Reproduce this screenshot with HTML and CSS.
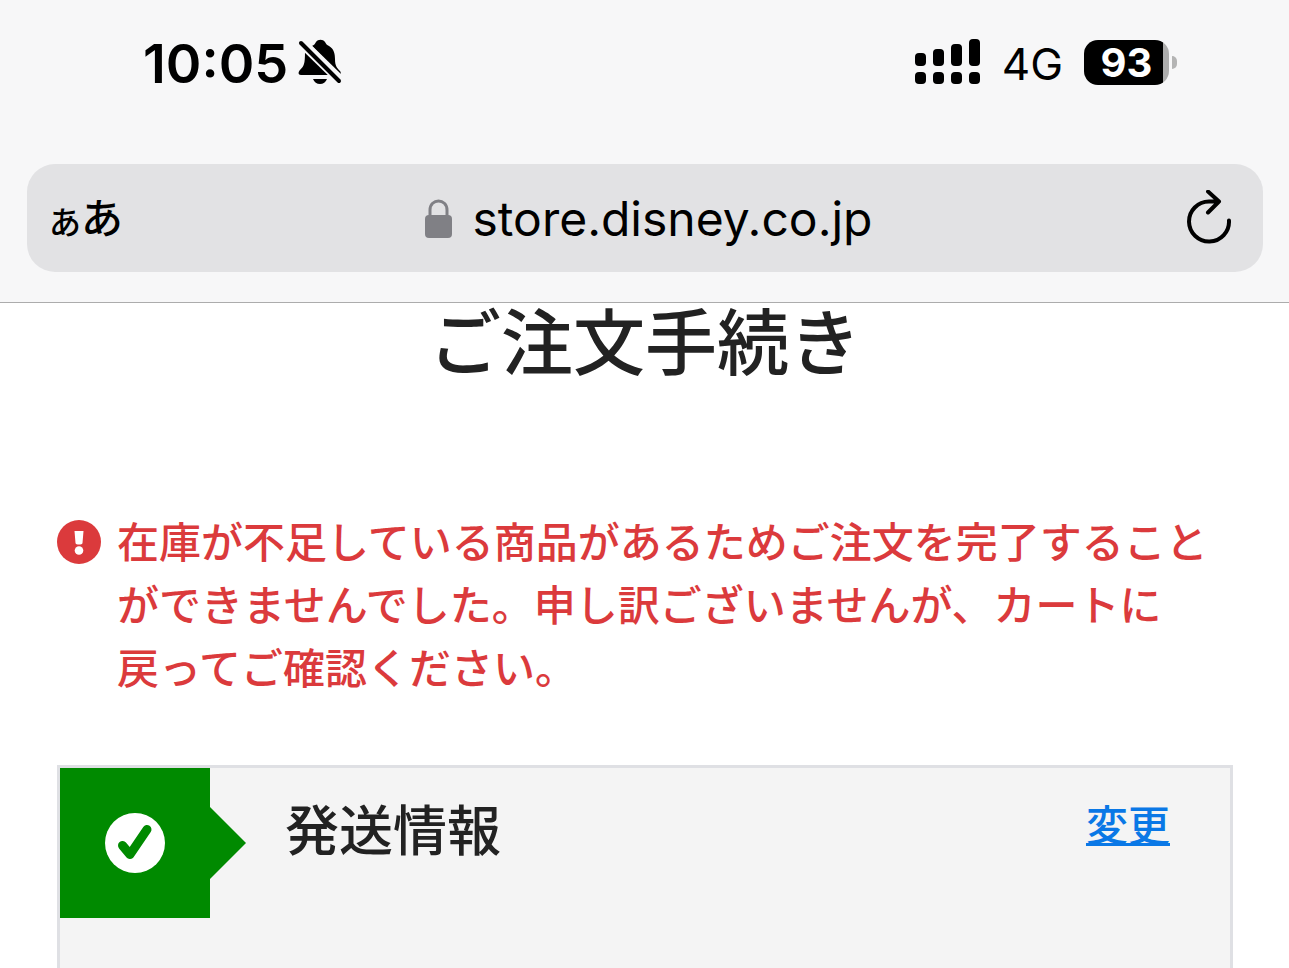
FILE: index.html
```
<!DOCTYPE html>
<html lang="ja">
<head>
    <meta charset="UTF-8">
    <title>ご注文手続き</title>
    <link rel="stylesheet" href="styles.css">
</head>
<body>
    <header class="browser">
        <div class="status">
            <div class="status-left">
                <span class="time">10:05</span>
                <svg class="bell" width="44" height="46" viewBox="0 0 44 46">
                    <path d="M14 7C16 6 17 5 18 3c2-3 7-3 9 0 1 2 2 3 4 4 5 3 6 8 6 13 0 7 2 9 5 12 1 1 1 3 0 4z"/>
                    <path d="M7 13l24 23H3c-3 0-3-3-1-5 4-4 5-6 5-18zM15 40h14c-1 3-4 5-7 5s-6-2-7-5z"/>
                    <path class="gap" d="M3 3l39 38"/>
                    <path class="slash" d="M3 4l38 38"/>
                </svg>
            </div>
            <div class="status-right">
                <svg width="66" height="46" viewBox="0 0 66 46">
                    <rect x="0" y="14" width="11" height="13" rx="4"/>
                    <rect x="18" y="10" width="11" height="17" rx="4"/>
                    <rect x="36" y="5" width="11" height="22" rx="4"/>
                    <rect x="54" y="0" width="11" height="27" rx="4"/>
                    <rect x="0" y="33" width="11" height="12" rx="4"/>
                    <rect x="18" y="33" width="11" height="12" rx="4"/>
                    <rect x="36" y="33" width="11" height="12" rx="4"/>
                    <rect x="54" y="33" width="11" height="12" rx="4"/>
                </svg>
                <span class="network">4G</span>
                <div class="battery">
                    <span class="battery-level">93</span>
                </div>
            </div>
        </div>
        <div class="address">
            <button type="button" class="reader" aria-label="表示設定"><span class="small">あ</span>あ</button>
            <div class="url">
                <svg width="28" height="40" viewBox="0 0 28 40">
                    <path d="M5 18V11c0-12 17-12 17 0v7" fill="none" stroke="#808085" stroke-width="3"/>
                    <rect x="0" y="16" width="27" height="23" rx="4" fill="#808085"/>
                </svg>
                <span>store.disney.co.jp</span>
            </div>
            <button type="button" class="reload" aria-label="再読み込み">
                <svg width="46" height="56" viewBox="0 0 46 56">
                    <path d="M43 30.500A20 20 0 1 1 23 11.500H33M22 1.500L33 11.500 22 22.500"/>
                </svg>
            </button>
        </div>
    </header>

    <main class="container">
        <h1>ご注文手続き</h1>
        <div class="error" role="alert">
            <svg width="44" height="44" viewBox="0 0 44 44">
                <circle cx="22" cy="22" r="22" fill="#db3a3c"/>
                <path d="M17.500 11h9l-1 12c0 2-7 2-7 0z" fill="#fff"/>
                <circle cx="22" cy="30.500" r="4.300" fill="#fff"/>
            </svg>
            <p>在庫が不足している商品があるためご注文を完了することができませんでした。申し訳ございませんが、カートに<br>戻ってご確認ください。</p>
        </div>

        <section class="step">
            <div class="step-mark">
                <svg width="60" height="60" viewBox="0 0 60 60">
                    <circle cx="30" cy="30" r="30" fill="#fff"/>
                    <path d="M17.500 32.500L25 41.500 42 16.500" fill="none" stroke="#008a00" stroke-width="9" stroke-linecap="round" stroke-linejoin="round"/>
                </svg>
            </div>
            <h2>発送情報</h2>
            <a href="#">変更</a>
        </section>
    </main>
</body>
</html>
```

FILE: styles.css
```
* {
    box-sizing: border-box;
}

body {
    margin: 0;
    min-height: 100vh;
    display: flex;
    flex-direction: column;
    background-color: #fff;
    color: #222;
    font-family: Inter, "Noto Sans CJK JP", sans-serif;
}

button {
    border: none;
    padding: 0;
    background: none;
    color: #000;
    font-family: inherit;
    cursor: pointer;
}

svg {
    display: block;
    flex: none;
}

h1, h2, p {
    margin: 0;
    font-weight: 500;
}

/* ブラウザの上部 */
.browser {
    padding: 0 26px 30px 27px;
    background-color: #f7f7f8;
    border-bottom: 1px solid #acacac;
    color: #000;
}

.status {
    display: flex;
    justify-content: space-between;
    height: 164px;
    padding: 32px 94px 0 116px;
}

.status-left,
.status-right {
    display: flex;
    align-items: center;
    height: 60px;
}

.status-left {
    gap: 10px;
}

.status-right {
    gap: 21px;
}

.time {
    padding-top: 2px;
    font-size: 54px;
    font-weight: 600;
}

.bell .gap,
.bell .slash {
    fill: none;
    stroke: #f7f7f8;
    stroke-width: 10;
}

.bell .slash {
    stroke: #000;
    stroke-width: 4;
    stroke-linecap: round;
}

.network {
    padding-top: 4px;
    font-size: 44px;
}

.battery {
    position: relative;
    width: 85px;
    height: 45px;
    border-radius: 14px;
    background: linear-gradient(to right, #000 79px, #adadad 79px);
    text-align: center;
}

.battery::after {
    content: "";
    position: absolute;
    right: -8px;
    top: 16px;
    width: 5px;
    height: 13px;
    border-radius: 0 5px 5px 0;
    background-color: #b4b4b4;
}

.battery-level {
    color: #fff;
    font-size: 40px;
    font-weight: 700;
    line-height: 45px;
}

.address {
    display: flex;
    justify-content: space-between;
    align-items: center;
    height: 108px;
    padding: 0 31px 0 22px;
    border-radius: 28px;
    background-color: #e2e2e4;
}

.reader {
    flex: 1;
    padding-top: 6px;
    text-align: left;
    font-size: 42px;
    font-weight: 500;
    line-height: 60px;
}

.reader .small {
    font-size: 32px;
}

.url {
    display: flex;
    align-items: center;
    gap: 20px;
    padding: 2px 0 0 16px;
    font-size: 48px;
    line-height: 60px;
}

.reload {
    flex: 1;
    display: flex;
    justify-content: flex-end;
}

.reload svg {
    fill: none;
    stroke: #000;
    stroke-width: 4;
    stroke-linecap: round;
    stroke-linejoin: round;
}

/* 注文ページ */
.container {
    flex: 1;
    display: flex;
    flex-direction: column;
    padding: 0 56px 0 57px;
}

h1 {
    font-size: 72px;
    line-height: 80px;
    text-align: center;
}

.error {
    display: flex;
    align-items: flex-start;
    gap: 16px;
    margin: 128px 0 65px;
    color: #db3a3c;
}

.error svg {
    margin-top: 9px;
}

.error p {
    font-size: 42px;
    line-height: 63px;
}

.step {
    flex: 1;
    display: flex;
    align-items: flex-start;
    padding-right: 60px;
    border: 3px solid #dfe0e4;
    border-bottom: none;
    background-color: #f4f4f4;
}

.step-mark {
    position: relative;
    display: flex;
    justify-content: center;
    align-items: center;
    width: 150px;
    height: 150px;
    background-color: #008a00;
}

.step-mark::after {
    content: "";
    position: absolute;
    left: 150px;
    top: 39px;
    border: 36px solid transparent;
    border-left-color: #008a00;
    border-right: none;
}

.step h2 {
    flex: 1;
    margin: 32px 0 0 75px;
    font-size: 54px;
    line-height: 64px;
}

.step a {
    margin-top: 28px;
    color: #0a78e6;
    font-size: 42px;
    font-weight: 500;
    line-height: 60px;
    text-decoration-thickness: 3px;
    text-decoration-skip-ink: none;
}
```
